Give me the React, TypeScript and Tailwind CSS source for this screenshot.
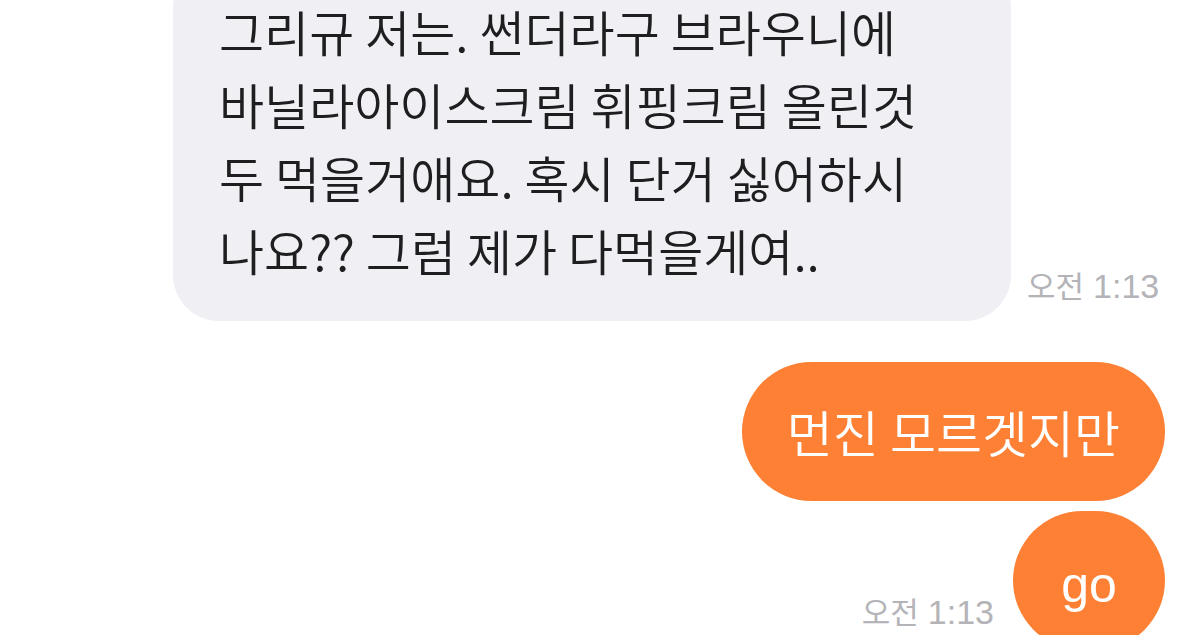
import React from "react";

const font = { fontFamily: '"Noto Sans CJK KR", "Noto Sans", sans-serif' };
const latin = { fontFamily: '"Liberation Sans", "Noto Sans CJK KR", sans-serif' };

function Time({ className }: { className: string }) {
  return (
    <div className={"flex items-baseline leading-none text-[#b3b3b8] whitespace-nowrap " + className}>
      <span className="text-[31px]" style={font}>
        오전
      </span>
      <span className="ml-[9px] text-[34px]" style={latin}>
        1:13
      </span>
    </div>
  );
}

export default function App() {
  return (
    <div
      className="w-[1200px] h-[635px] overflow-hidden bg-white flex flex-col"
      style={font}
    >
      {/* incoming message */}
      <div className="flex items-end pl-[173px] mt-[-38px]">
        <div className="w-[838px] shrink-0 bg-[#efeff4] rounded-[46px] pl-[46px] pr-[30px] pt-[32px] pb-[35px] text-[49px] font-[350] leading-[73px] text-[#1e1e20] whitespace-nowrap">
          <div>그리규 저는. 썬더라구 브라우니에</div>
          <div>바닐라아이스크림 휘핑크림 올린것</div>
          <div>두 먹을거애요. 혹시 단거 싫어하시</div>
          <div>나요?? 그럼 제가 다먹을게여..</div>
        </div>
        <Time className="ml-[16px] mb-[18px]" />
      </div>

      {/* outgoing messages */}
      <div className="flex flex-col items-end pr-[35px] mt-[41px] gap-[10px]">
        <div className="h-[139px] rounded-full bg-[#fd8034] px-[45px] flex items-center text-[50px] font-[350] text-white whitespace-nowrap">
          먼진 모르겟지만
        </div>
        <div className="flex items-end">
          <Time className="mr-[19px] mb-[21px]" />
          <div
            className="w-[152px] h-[139px] rounded-full bg-[#fd8034] flex items-center justify-center pt-[10px] text-[50px] text-white"
            style={latin}
          >
            go
          </div>
        </div>
      </div>
    </div>
  );
}
